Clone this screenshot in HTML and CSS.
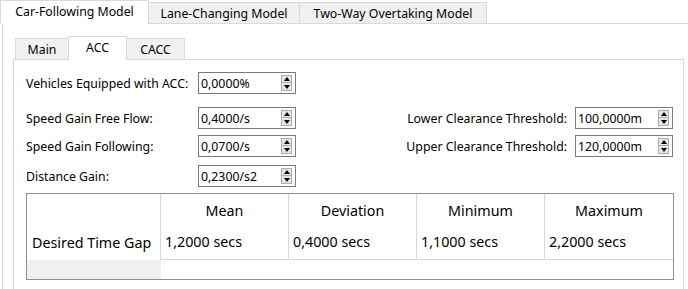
FILE: index.html
```html
<!DOCTYPE html>
<html>
<head>
<meta charset="utf-8">
<link rel="stylesheet" href="styles.css">
</head>
<body>
<div class="tabs outer">
  <div class="tabbar">
    <div class="tab active t-car">Car-Following Model</div>
    <div class="tab t-lane">Lane-Changing Model</div>
    <div class="tab t-two">Two-Way Overtaking Model</div>
  </div>
  <div class="pane outer-pane">
    <div class="tabs inner">
      <div class="tabbar inner-bar">
        <div class="tab t-main">Main</div>
        <div class="tab active t-acc">ACC</div>
        <div class="tab t-cacc">CACC</div>
      </div>
      <div class="pane inner-pane">
        <div class="row row1">
          <div class="label">Vehicles Equipped with ACC:</div>
          <div class="spin"><span class="val">0,0000%</span><span class="btns"><span class="btn up"></span><span class="btn down"></span></span></div>
        </div>
        <div class="row row2">
          <div class="label">Speed Gain Free Flow:</div>
          <div class="spin"><span class="val">0,4000/s</span><span class="btns"><span class="btn up"></span><span class="btn down"></span></span></div>
          <div class="rlabel">Lower Clearance Threshold:</div>
          <div class="spin"><span class="val">100,0000m</span><span class="btns"><span class="btn up"></span><span class="btn down"></span></span></div>
        </div>
        <div class="row row3">
          <div class="label">Speed Gain Following:</div>
          <div class="spin"><span class="val">0,0700/s</span><span class="btns"><span class="btn up"></span><span class="btn down"></span></span></div>
          <div class="rlabel">Upper Clearance Threshold:</div>
          <div class="spin"><span class="val">120,0000m</span><span class="btns"><span class="btn up"></span><span class="btn down"></span></span></div>
        </div>
        <div class="row row4">
          <div class="label">Distance Gain:</div>
          <div class="spin"><span class="val">0,2300/s2</span><span class="btns"><span class="btn up"></span><span class="btn down"></span></span></div>
        </div>
        <div class="table">
          <div class="cell corner"></div>
          <div class="cell head">Mean</div>
          <div class="cell head">Deviation</div>
          <div class="cell head">Minimum</div>
          <div class="cell head last">Maximum</div>
          <div class="cell rowhead">Desired Time Gap</div>
          <div class="cell data">1,2000 secs</div>
          <div class="cell data">0,4000 secs</div>
          <div class="cell data">1,1000 secs</div>
          <div class="cell data last">2,2000 secs</div>
          <div class="cell empty-head"></div>
          <div class="cell empty-data"></div>
        </div>
      </div>
    </div>
  </div>
</div>
</body>
</html>
```

FILE: styles.css
```css
html, body {
  margin: 0;
  padding: 0;
  background: #ffffff;
}
body {
  width: 688px;
  height: 289px;
  overflow: hidden;
  font-family: "Noto Sans", "Open Sans", sans-serif;
  font-size: 12.3px;
  color: #000000;
}
.tabs.outer {
  width: 692px;
}
.tabbar {
  display: flex;
  align-items: flex-end;
  height: 23px;
}
.tab {
  box-sizing: border-box;
  height: 21px;
  border: 1px solid #d9d9d9;
  border-bottom: none;
  background: #f0f0f0;
  margin-left: -1px;
  display: flex;
  align-items: center;
  justify-content: center;
  padding-top: 1px;
  white-space: nowrap;
}
.tab.active {
  position: relative;
  z-index: 1;
  height: 24px;
  margin-bottom: -1px;
  background: #ffffff;
  padding-top: 0;
  padding-bottom: 2px;
}
.t-car { width: 149px; margin-left: 0; }
.t-lane { width: 152px; }
.t-two { width: 188px; }
.pane {
  box-sizing: border-box;
  border: 1px solid #d9d9d9;
  border-bottom: none;
  background: #ffffff;
}
.outer-pane {
  margin-left: 2px;
  height: 266px;
  padding: 12px 7px 0 10px;
}
.inner-bar {
  padding-left: 3px;
}
.t-main { width: 54px; }
.t-acc { width: 59px; }
.t-cacc { width: 59px; }
.inner-pane {
  height: 230px;
  padding: 12px 10px 0 12px;
}
.row {
  display: flex;
  align-items: center;
  height: 22px;
}
.row1 { margin-bottom: 13px; }
.row2 { margin-bottom: 6px; }
.row3 { margin-bottom: 8px; }
.row4 { margin-bottom: 6px; }
.label {
  width: 172px;
  flex: none;
  white-space: nowrap;
}
.rlabel {
  flex: 1;
  text-align: right;
  padding-right: 8px;
  white-space: nowrap;
}
.spin {
  box-sizing: border-box;
  width: 98px;
  height: 22px;
  flex: none;
  border: 1px solid #7a7a7a;
  display: flex;
  align-items: center;
  padding-left: 2px;
  padding-right: 3px;
}
.val {
  flex: 1;
}
.btns {
  display: flex;
  flex-direction: column;
  width: 11px;
  height: 16px;
}
.btn {
  box-sizing: border-box;
  height: 8px;
  border: 1px solid #adadad;
  background: #e5e5e5;
  display: flex;
  align-items: center;
  justify-content: center;
}
.btn.down {
  border-top: none;
}
.btn.up::after {
  content: "";
  border-left: 3px solid transparent;
  border-right: 3px solid transparent;
  border-bottom: 4px solid #000000;
}
.btn.down::after {
  content: "";
  border-left: 3px solid transparent;
  border-right: 3px solid transparent;
  border-top: 4px solid #000000;
}
.table {
  box-sizing: border-box;
  width: 648px;
  border: 1px solid #8e8e8e;
  display: grid;
  grid-template-columns: 134px repeat(4, 128px);
  grid-template-rows: 30px 36px 19px;
  font-size: 14.3px;
}
.cell {
  box-sizing: border-box;
  display: flex;
  align-items: center;
  white-space: nowrap;
}
.corner {
  border-right: 1px solid #d8d8d8;
}
.head {
  justify-content: center;
  border-right: 1px solid #d8d8d8;
  padding-top: 2px;
}
.head.last, .data.last {
  border-right: none;
}
.rowhead {
  padding-left: 5px;
  border-right: 1px solid #d8d8d8;
}
.data {
  padding-left: 4px;
  border-right: 1px solid #d8d8d8;
  border-bottom: 1px solid #d8d8d8;
}
.empty-head {
  background: #f0f0f0;
}
.empty-data {
  grid-column: 2 / 6;
}
```
